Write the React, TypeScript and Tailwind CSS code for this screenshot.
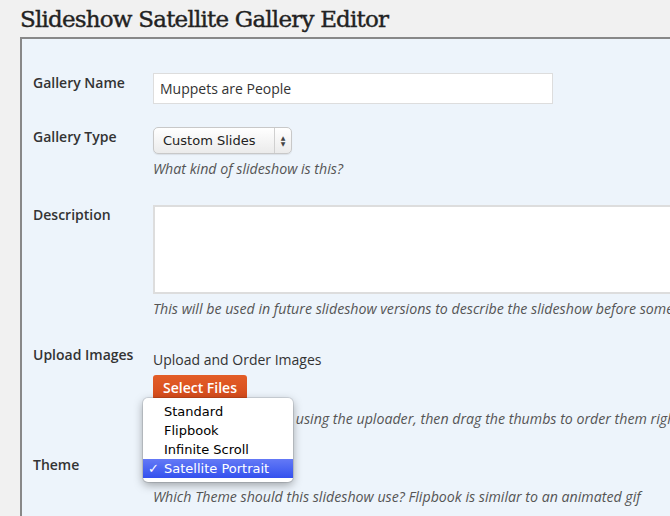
import React from 'react';

const sans = { fontFamily: '"Open Sans", "Liberation Sans", sans-serif' };

const Label: React.FC<{ text: string; className?: string }> = ({ text, className }) => (
  <div className={`w-[120px] shrink-0 text-[14px] font-semibold leading-[20px] text-[#333] ${className ?? ''}`}>{text}</div>
);

const Hint: React.FC<{ children: React.ReactNode; className?: string }> = ({ children, className }) => (
  <p className={`whitespace-nowrap text-[14.2px] italic leading-[19px] text-[#555] ${className ?? ''}`}>{children}</p>
);

const themes = ['Standard', 'Flipbook', 'Infinite Scroll', 'Satellite Portrait'];

export default function App() {
  return (
    <div className="h-[516px] w-[670px] overflow-hidden bg-[#f1f1f1]" style={sans}>
      <h1 className="pl-[20px] pt-[4px] text-[23px] leading-[30px] tracking-[-0.8px] text-[#222] [-webkit-text-stroke:0.4px_#222] font-['DejaVu_Serif',serif]">
        Slideshow Satellite Gallery Editor
      </h1>

      <div className="ml-[20px] mt-[3px] h-[500px] border-l-2 border-t-2 border-[#888] bg-[#edf4fb] pl-[11px] pt-[34px]">
        {/* Gallery Name */}
        <div className="flex">
          <Label text="Gallery Name" />
          <div className="flex h-[31px] w-[400px] items-center border border-[#dddddd] bg-white px-[6px] text-[14px] text-[#333]">
            Muppets are People
          </div>
        </div>

        {/* Gallery Type */}
        <div className="mt-[23px] flex">
          <Label text="Gallery Type" />
          <div>
            <div className="flex h-[27px] w-[139px] items-center rounded-[5px] border border-[#c8c8c8] bg-gradient-to-b from-white to-[#ebebeb] text-[#222] shadow-[0_1px_1px_rgba(0,0,0,0.08)] font-['DejaVu_Sans',sans-serif]">
              <span className="flex-1 pl-[9px] text-[13px]">Custom Slides</span>
              <span className="flex h-full w-[17px] flex-col items-center justify-center border-l border-[#d0d0d0] text-[6px] leading-[6px] text-[#444]">
                <span>▲</span>
                <span>▼</span>
              </span>
            </div>
            <Hint className="mt-[5px]">What kind of slideshow is this?</Hint>
          </div>
        </div>

        {/* Description */}
        <div className="mt-[27px] flex">
          <Label text="Description" />
          <div className="min-w-0 flex-1">
            <div className="h-[89px] w-[540px] border-2 border-[#dddddd] bg-white" />
            <Hint className="mt-[5px]">This will be used in future slideshow versions to describe the slideshow before some users see it</Hint>
          </div>
        </div>

        {/* Upload Images */}
        <div className="mt-[32px] flex">
          <Label text="Upload Images" className="-mt-[5px]" />
          <div>
            <div className="text-[14px] leading-[20px] text-[#333]">Upload and Order Images</div>
            <button className="mt-[5px] h-[25px] w-[94px] rounded-[3px] bg-gradient-to-b from-[#e35d27] to-[#d44a1b] pl-[10px] text-left text-[14px] font-semibold text-white">
              Select Files
            </button>
            <Hint className="mt-[9px]">Select multiple images using the uploader, then drag the thumbs to order them right</Hint>
          </div>
        </div>

        {/* Theme */}
        <div className="mt-[27px] flex">
          <Label text="Theme" />
          <div className="relative">
            <div className="h-[27px] w-[137px] rounded-[5px] border border-[#c8c8c8] bg-white" />
            <Hint className="mt-[5px]">Which Theme should this slideshow use? Flipbook is similar to an animated gif</Hint>

            <ul className="absolute left-[-10px] top-[-57px] w-[150px] rounded-[5px] bg-white py-[4px] text-[13px] text-black shadow-[0_3px_10px_rgba(0,0,0,0.35)] ring-1 ring-black/10 font-['DejaVu_Sans',sans-serif]">
              {themes.map((t) => {
                const sel = t === 'Satellite Portrait';
                return (
                  <li
                    key={t}
                    className={`relative h-[19px] pl-[21px] leading-[19px] ${sel ? 'bg-gradient-to-b from-[#6479f6] to-[#3450ee] text-white' : ''}`}
                  >
                    {sel && <span className="absolute left-[5px] top-0">✓</span>}
                    {t}
                  </li>
                );
              })}
            </ul>
          </div>
        </div>
      </div>
    </div>
  );
}
